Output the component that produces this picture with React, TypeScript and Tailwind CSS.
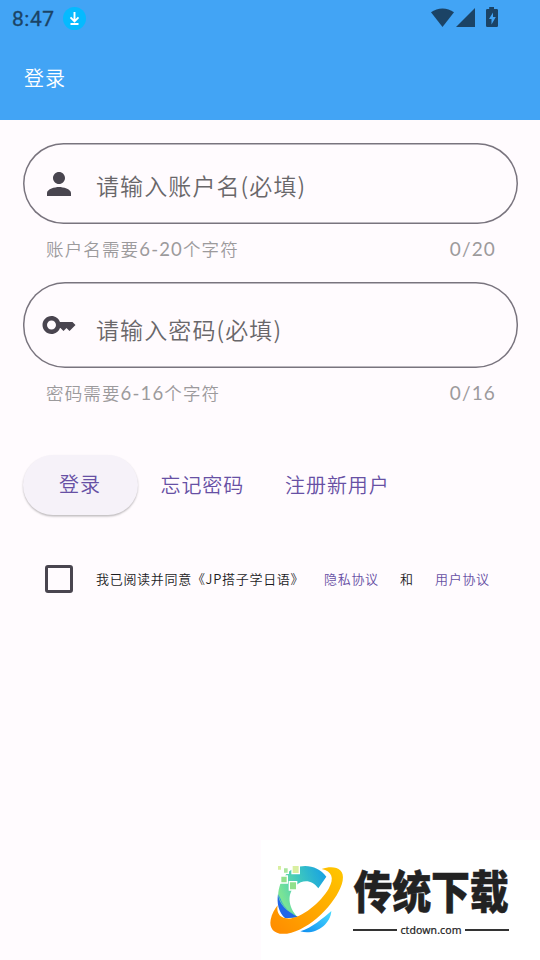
import { useState } from 'react';

const StatusBar = () => (
  <div className="flex h-9 items-center justify-between pl-3 pr-[41px] text-[#1b4365]">
    <div className="flex items-center gap-[8px]">
      <span className="mt-[2px] font-['Roboto'] text-[21px] font-normal leading-9 tracking-[0.5px] [-webkit-text-stroke:0.3px]">8:47</span>
      <svg className="size-[23px]" viewBox="0 0 23 23">
        <circle cx="11.5" cy="11.5" r="11.5" fill="#05baff" />
        <path d="M11.5 5v9M7.5 10.3l4 4 4-4M7.5 17h8" fill="none" stroke="#fff" strokeWidth="1.9" />
      </svg>
    </div>
    <svg className="-mt-[2px] h-[21px] w-[68px]" viewBox="0 0 68 21" fill="currentColor">
      <path d="M0 5.3C6.5.1 16.5.1 23 5.3L11.5 20z" />
      <path d="M25 20 44 1v19z" />
      <path
        fillRule="evenodd"
        d="M58.2 0h4.800v2h2.700q1.300 0 1.300 1.300v15.400q0 1.300-1.300 1.300H56.300q-1.300 0-1.300-1.300V3.300Q55 2 56.300 2h1.900zM62 5.500 58 12h2.500v5.500L64.800 10H62z"
      />
    </svg>
  </div>
);

type FieldProps = {
  icon: React.ReactNode;
  placeholder: string;
  helper: React.ReactNode;
  max: number;
  className: string;
  labelClass: string;
};

const Field = ({ icon, placeholder, helper, max, className, labelClass }: FieldProps) => (
  <div>
    <div className={`flex items-center rounded-[42px] ring-[1.5px] ring-inset ring-[#79747e] pl-[18px] ${className}`}>
      {icon}
      <span className={`ml-[19px] text-[23px] font-[350] leading-8 tracking-[1.1px] text-[#69676a] ${labelClass}`}>
        {placeholder}
      </span>
    </div>
    <div className="mt-[12.5px] flex h-6 justify-between px-[23px] text-[17.5px] font-[350] leading-6 tracking-[1.15px] text-[#9c9a9c]">
      <span>{helper}</span>
      <span className="-mr-px font-['Lato'] text-[19px] font-normal">0/{max}</span>
    </div>
  </div>
);

const Logo = () => (
  <svg className="size-[90px]" viewBox="0 0 270 270">
    <defs>
      <linearGradient id="ring" x1="0" y1="1" x2="1" y2="0">
        <stop offset="0" stopColor="#ff8a00" />
        <stop offset="1" stopColor="#ffc700" />
      </linearGradient>
      <linearGradient id="arc" x1="0" y1="0.4" x2="1" y2="0">
        <stop offset="0" stopColor="#7be495" />
        <stop offset="0.45" stopColor="#3cc6c0" />
        <stop offset="1" stopColor="#129ce8" />
      </linearGradient>
      <linearGradient id="tail" x1="0" y1="1" x2="1" y2="0">
        <stop offset="0" stopColor="#0d8cf0" />
        <stop offset="1" stopColor="#4bdcff" />
      </linearGradient>
    </defs>
    <path d="M193 65C165 25 105 22 73 57 42 91 40 151 69 189L108 187C76 155 75 113 101 92 123 72 151 75 169 100Z" fill="url(#arc)" />
    <path d="M48 117C51 148 73 169 110 187L70 190C49 172 44 144 48 117Z" fill="#2166e8" />
    <path d="M49 119C56 149 78 171 110 184 84 175 63 155 54 128Z" fill="#1a8cf0" />
    <path d="M115 229C150 218 181 191 208 168 205 211 157 242 115 229Z" fill="url(#tail)" />
    <path
      d="M179 42C215 30 249 39 242 77 232 130 158 214 88 233 43 245 20 225 26 194 29 178 38 162 47 151 43 173 52 187 72 190 113 196 176 142 200 101 218 69 210 49 179 42Z"
      fill="url(#ring)"
    />
    <g stroke="#fff" strokeWidth="4">
      <path d="M90 31h22v25H90z" fill="#d9efa0" />
      <path d="M56 63h20v21H56z" fill="#92e08c" />
      <path d="M82 80h22v25H82z" fill="#92e08c" />
      <path d="M64 38h15v17H64z" fill="#a9e69c" />
      <path d="M46 31h13v15H46z" fill="#d9efa0" />
    </g>
  </svg>
);

const Watermark = () => (
  <div className="absolute bottom-0 right-0 flex h-[120px] w-[279px] bg-white pl-px pt-[15px] text-[#222]">
    <Logo />
    <div className="ml-px flex w-[156px] flex-col pt-[11px]">
      <div className="flex h-[57px] justify-center">
        <div className="h-[40px] origin-top scale-y-[1.16] whitespace-nowrap text-[39px] font-black leading-[40px] tracking-[-0.3px] [-webkit-text-stroke:0.4px]">
          传统下载
        </div>
      </div>
      <div className="flex items-center gap-[3px] text-[10.5px] leading-[14px]">
        <span className="h-[2px] flex-1 bg-[#333]" />
        <span className="font-['Noto_Sans'] font-normal tracking-[0.1px] [-webkit-text-stroke:0.2px]">ctdown.com</span>
        <span className="h-[2px] flex-1 bg-[#333]" />
      </div>
    </div>
  </div>
);

export default function App() {
  const [agreed, setAgreed] = useState(false);

  return (
    <div className="relative h-[960px] w-[540px] overflow-hidden bg-[#fffbfe] font-['Noto_Sans_CJK_SC',sans-serif]">
      <header className="h-[120px] bg-[#42a4f5]">
        <StatusBar />
        <h1 className="pl-6 pt-[26px] text-[20px] font-[350] leading-8 tracking-[1px] text-white">登录</h1>
      </header>

      <main className="pl-[23px] pr-[22px] pt-[23px]">
        <Field
          className="h-[81px]"
          labelClass="mt-[2px]"
          icon={
            <svg className="size-9" viewBox="0 0 24 24" fill="#49454f">
              <path d="M12 12c2.210 0 4-1.790 4-4s-1.790-4-4-4-4 1.790-4 4 1.790 4 4 4zm0 2c-2.670 0-8 1.340-8 4v2h16v-2c0-2.660-5.330-4-8-4z" />
            </svg>
          }
          placeholder="请输入账户名(必填)"
          helper={<>账户名需要<span className="font-['Lato'] text-[18.5px] font-normal">6-20</span>个字符</>}
          max={20}
        />
        <Field
          className="mt-[21.5px] h-[86px]"
          labelClass="mt-[8px]"
          icon={
            <svg className="size-9" viewBox="0 0 24 24" fill="#49454f">
              <path d="M21 10h-8.350C11.830 7.670 9.610 6 7 6c-3.310 0-6 2.690-6 6s2.690 6 6 6c2.610 0 4.830-1.670 5.650-4H13l2 2 2-2 2 2 4-4.040L21 10zM7 15c-1.650 0-3-1.350-3-3s1.350-3 3-3 3 1.350 3 3-1.350 3-3 3z" />
            </svg>
          }
          placeholder="请输入密码(必填)"
          helper={<>密码需要<span className="font-['Lato'] text-[18.5px] font-normal">6-16</span>个字符</>}
          max={16}
        />

        <div className="mt-[50px] flex items-center text-[20px] font-[350] leading-[58px] tracking-[0.9px] text-[#6750a4]">
          <button className="-ml-[0.5px] h-[60px] w-[115px] rounded-full bg-[#f6f2f9] pb-[2px] shadow-[0_1.5px_2px_rgba(0,0,0,0.25)]">登录</button>
          <button className="ml-[23px]">忘记密码</button>
          <button className="ml-[41px]">注册新用户</button>
        </div>

        <div className="mt-[50px] flex items-center pl-[22px] text-[13px] font-[350] leading-7 tracking-[0.7px] text-[#1c1b1f]">
          <button
            role="checkbox"
            aria-checked={agreed}
            onClick={() => setAgreed(!agreed)}
            className="size-[28px] rounded-[3px] border-[3px] border-[#49454f]"
          />
          <span className="ml-[23px] w-[228px] whitespace-nowrap">我已阅读并同意《JP搭子学日语》</span>
          <a className="w-[76px] text-[#6750a4]">隐私协议</a>
          <span className="w-[35px]">和</span>
          <a className="whitespace-nowrap text-[#6750a4]">用户协议</a>
        </div>
      </main>

      <Watermark />
    </div>
  );
}
